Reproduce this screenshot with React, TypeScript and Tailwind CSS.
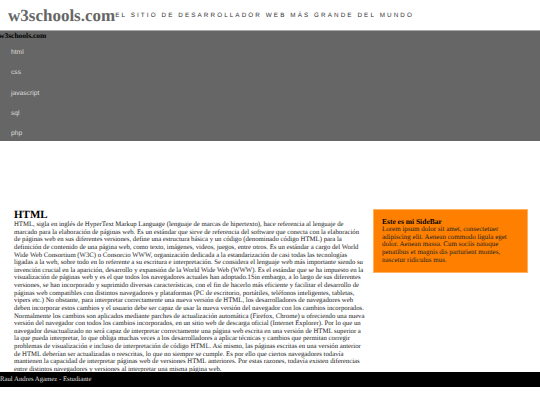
const navItems = ["html", "css", "javascript", "sql", "php"];

const articleText =
  "HTML, sigla en inglés de HyperText Markup Language (lenguaje de marcas de hipertexto), hace referencia al lenguaje de marcado para la elaboración de páginas web. Es un estándar que sirve de referencia del software que conecta con la elaboración de páginas web en sus diferentes versiones, define una estructura básica y un código (denominado código HTML) para la definición de contenido de una página web, como texto, imágenes, videos, juegos, entre otros. Es un estándar a cargo del World Wide Web Consortium (W3C) o Consorcio WWW, organización dedicada a la estandarización de casi todas las tecnologías ligadas a la web, sobre todo en lo referente a su escritura e interpretación. Se considera el lenguaje web más importante siendo su invención crucial en la aparición, desarrollo y expansión de la World Wide Web (WWW). Es el estándar que se ha impuesto en la visualización de páginas web y es el que todos los navegadores actuales han adoptado.1Sin embargo, a lo largo de sus diferentes versiones, se han incorporado y suprimido diversas características, con el fin de hacerlo más eficiente y facilitar el desarrollo de páginas web compatibles con distintos navegadores y plataformas (PC de escritorio, portátiles, teléfonos inteligentes, tabletas, vipers etc.) No obstante, para interpretar correctamente una nueva versión de HTML, los desarrolladores de navegadores web deben incorporar estos cambios y el usuario debe ser capaz de usar la nueva versión del navegador con los cambios incorporados. Normalmente los cambios son aplicados mediante parches de actualización automática (Firefox, Chrome) u ofreciendo una nueva versión del navegador con todos los cambios incorporados, en un sitio web de descarga oficial (Internet Explorer). Por lo que un navegador desactualizado no será capaz de interpretar correctamente una página web escrita en una versión de HTML superior a la que pueda interpretar, lo que obliga muchas veces a los desarrolladores a aplicar técnicas y cambios que permitan corregir problemas de visualización e incluso de interpretación de código HTML. Así mismo, las páginas escritas en una versión anterior de HTML deberían ser actualizadas o reescritas, lo que no siempre se cumple. Es por ello que ciertos navegadores todavía mantienen la capacidad de interpretar páginas web de versiones HTML anteriores. Por estas razones, todavía existen diferencias entre distintos navegadores y versiones al interpretar una misma página web.";

export default function App() {
  return (
    <div className="w-[540px] h-[405px] overflow-hidden bg-white font-['Liberation_Serif',serif] text-black [text-rendering:geometricPrecision]">
      <header className="h-[30px] flex items-center pl-2 pt-[1px]">
        <h1 className="text-[17px] font-bold text-[#666] leading-none">w3schools.com</h1>
        <span className="font-['Liberation_Sans',sans-serif] text-[6.3px] tracking-[2.1px] text-[#333] uppercase">
          El sitio de desarrollador web más grande del mundo
        </span>
      </header>

      <nav className="h-[111px] bg-[#666] border-t border-[#aaa]">
        <h2 className="text-[7.5px] font-bold leading-[8px] pt-[1px] -ml-[1px]">w3schools.com</h2>
        <ul className="font-['Liberation_Sans',sans-serif] text-[6.7px] text-[#ddd] pl-[11px] pt-[3px]">
          {navItems.map((item) => (
            <li key={item} className="h-[20.25px] flex items-center">
              {item}
            </li>
          ))}
        </ul>
      </nav>

      <main className="h-[231px] flex pl-[14px] pt-[68px]">
        <article className="w-[351px]">
          <h2 className="text-[11px] font-bold leading-[12px]">HTML</h2>
          <p className="text-[6.75px] leading-[7.63px] text-[#222]">{articleText}</p>
        </article>
        <aside className="ml-[8px] w-[155px] h-[64px] bg-[#ff8000] border border-[#ffb060] px-[8px] pt-[8px] text-[7px] leading-[7.63px] text-[#222]">
          <h3 className="font-bold text-black text-[7.5px] leading-[8px]">Este es mi SideBar</h3>
          <p>
            Lorem ipsum dolor sit amet, consectetuer adipiscing elit. Aenean commodo ligula eget dolor. Aenean massa. Cum sociis natoque penatibus et magnis dis parturient montes, nascetur ridiculus mus.
          </p>
        </aside>
      </main>

      <footer className="h-[15px] bg-black text-[#ddd] text-[6.75px] leading-[15px]">Raul Andres Agamez - Estudiante</footer>
    </div>
  );
}
